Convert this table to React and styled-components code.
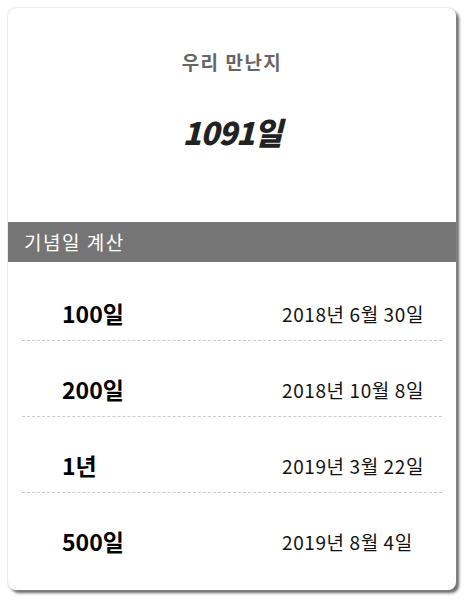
import React from "react";
import styled, { createGlobalStyle } from "styled-components";

const GlobalStyle = createGlobalStyle`
  body {
    margin: 0;
    background: #ffffff;
    font-family: "Noto Sans CJK KR", "Noto Sans", sans-serif;
  }
`;

const ANNIVERSARIES = [
  { label: "100일", date: "2018년 6월 30일" },
  { label: "200일", date: "2018년 10월 8일" },
  { label: "1년", date: "2019년 3월 22일" },
  { label: "500일", date: "2019년 8월 4일" },
];

const Page = styled.div`
  padding: 8px;
`;

const Card = styled.div`
  width: 448px;
  height: 582px;
  box-sizing: border-box;
  background: #fff;
  border-radius: 8px;
  overflow: hidden;
  box-shadow: 0 0 2px #bbb, 3px 3px 3px #666;
`;

const Summary = styled.div`
  display: flex;
  flex-direction: column;
  align-items: center;
  padding: 42px 0 68px;
`;

const SummaryTitle = styled.div`
  font-size: 19px;
  line-height: 24px;
  font-weight: 700;
  color: #666;
  letter-spacing: 1.5px;
`;

const DayCount = styled.div`
  margin-top: 36px;
  font-size: 31px;
  line-height: 44px;
  font-weight: 900;
  font-style: italic;
  color: #222;
  letter-spacing: -1px;
`;

const SectionBar = styled.div`
  height: 40px;
  padding-left: 16px;
  background: #757575;
  color: #fff;
  font-size: 19px;
  line-height: 40px;
  letter-spacing: 1.5px;
`;

const List = styled.div`
  padding: 3px 14px 0;
`;

const Row = styled.div`
  display: grid;
  grid-template-columns: 220px 1fr;
  align-items: center;
  height: 26px;
  padding: 31px 0 18px 40px;
  border-bottom: ${props => (props.last ? "none" : "1px dashed #ccc")};
`;

const Label = styled.div`
  font-size: 23px;
  font-weight: 700;
  color: #000;
`;

const DateText = styled.div`
  font-size: 19px;
  color: #111;
  letter-spacing: 0.6px;
`;

export default function App() {
  return (
    <Page>
      <GlobalStyle />
      <Card>
        <Summary>
          <SummaryTitle>우리 만난지</SummaryTitle>
          <DayCount>1091일</DayCount>
        </Summary>
        <SectionBar>기념일 계산</SectionBar>
        <List>
          {ANNIVERSARIES.map((item, i) => (
            <Row key={item.label} last={i === ANNIVERSARIES.length - 1}>
              <Label>{item.label}</Label>
              <DateText>{item.date}</DateText>
            </Row>
          ))}
        </List>
      </Card>
    </Page>
  );
}
